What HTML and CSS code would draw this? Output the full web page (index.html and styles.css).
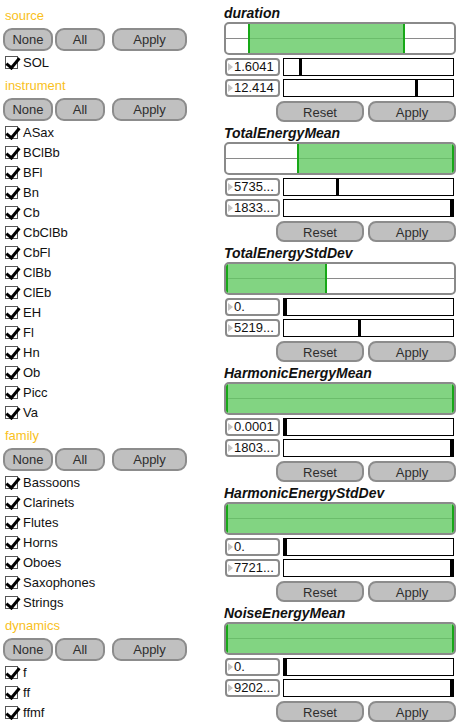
FILE: index.html
```html
<!DOCTYPE html>
<html>
<head>
<meta charset="utf-8">
<link rel="stylesheet" href="styles.css">
</head>
<body>
<div class="page">
  <div class="left">
    <section class="group">
      <div class="glabel">source</div>
      <div class="btnrow"><button class="btn w50">None</button><button class="btn w50">All</button><button class="btn w75 apply">Apply</button></div>
      <ul class="checks">
        <li><span class="cb"></span>SOL</li>
      </ul>
    </section>
    <section class="group">
      <div class="glabel">instrument</div>
      <div class="btnrow"><button class="btn w50">None</button><button class="btn w50">All</button><button class="btn w75 apply">Apply</button></div>
      <ul class="checks">
        <li><span class="cb"></span>ASax</li>
        <li><span class="cb"></span>BClBb</li>
        <li><span class="cb"></span>BFl</li>
        <li><span class="cb"></span>Bn</li>
        <li><span class="cb"></span>Cb</li>
        <li><span class="cb"></span>CbClBb</li>
        <li><span class="cb"></span>CbFl</li>
        <li><span class="cb"></span>ClBb</li>
        <li><span class="cb"></span>ClEb</li>
        <li><span class="cb"></span>EH</li>
        <li><span class="cb"></span>Fl</li>
        <li><span class="cb"></span>Hn</li>
        <li><span class="cb"></span>Ob</li>
        <li><span class="cb"></span>Picc</li>
        <li><span class="cb"></span>Va</li>
      </ul>
    </section>
    <section class="group">
      <div class="glabel">family</div>
      <div class="btnrow"><button class="btn w50">None</button><button class="btn w50">All</button><button class="btn w75 apply">Apply</button></div>
      <ul class="checks">
        <li><span class="cb"></span>Bassoons</li>
        <li><span class="cb"></span>Clarinets</li>
        <li><span class="cb"></span>Flutes</li>
        <li><span class="cb"></span>Horns</li>
        <li><span class="cb"></span>Oboes</li>
        <li><span class="cb"></span>Saxophones</li>
        <li><span class="cb"></span>Strings</li>
      </ul>
    </section>
    <section class="group">
      <div class="glabel">dynamics</div>
      <div class="btnrow"><button class="btn w50">None</button><button class="btn w50">All</button><button class="btn w75 apply">Apply</button></div>
      <ul class="checks">
        <li><span class="cb"></span>f</li>
        <li><span class="cb"></span>ff</li>
        <li><span class="cb"></span>ffmf</li>
      </ul>
    </section>
  </div>

  <div class="right">
    <section class="feat">
      <div class="ftitle">duration</div>
      <div class="range"><div class="fill" style="left:9.7%;width:68.7%"></div></div>
      <div class="numrow"><div class="num">1.6041</div><div class="bar"><i style="left:9%"></i></div></div>
      <div class="numrow"><div class="num">12.414</div><div class="bar"><i style="left:77.5%"></i></div></div>
      <div class="frow"><button class="btn fb">Reset</button><button class="btn fb">Apply</button></div>
    </section>
    <section class="feat">
      <div class="ftitle">TotalEnergyMean</div>
      <div class="range"><div class="fill" style="left:31%;width:69%"></div></div>
      <div class="numrow"><div class="num">5735...</div><div class="bar"><i style="left:31%"></i></div></div>
      <div class="numrow"><div class="num">1833...</div><div class="bar"><i class="end"></i></div></div>
      <div class="frow"><button class="btn fb">Reset</button><button class="btn fb">Apply</button></div>
    </section>
    <section class="feat">
      <div class="ftitle">TotalEnergyStdDev</div>
      <div class="range"><div class="fill" style="left:0;width:44.5%"></div></div>
      <div class="numrow"><div class="num">0.</div><div class="bar"><i style="left:0"></i></div></div>
      <div class="numrow"><div class="num">5219...</div><div class="bar"><i style="left:44%"></i></div></div>
      <div class="frow"><button class="btn fb">Reset</button><button class="btn fb">Apply</button></div>
    </section>
    <section class="feat">
      <div class="ftitle">HarmonicEnergyMean</div>
      <div class="range"><div class="fill" style="left:0;width:100%"></div></div>
      <div class="numrow"><div class="num">0.0001</div><div class="bar"><i style="left:0"></i></div></div>
      <div class="numrow"><div class="num">1803...</div><div class="bar"><i class="end"></i></div></div>
      <div class="frow"><button class="btn fb">Reset</button><button class="btn fb">Apply</button></div>
    </section>
    <section class="feat">
      <div class="ftitle">HarmonicEnergyStdDev</div>
      <div class="range"><div class="fill" style="left:0;width:100%"></div></div>
      <div class="numrow"><div class="num">0.</div><div class="bar"><i style="left:0"></i></div></div>
      <div class="numrow"><div class="num">7721...</div><div class="bar"><i class="end"></i></div></div>
      <div class="frow"><button class="btn fb">Reset</button><button class="btn fb">Apply</button></div>
    </section>
    <section class="feat">
      <div class="ftitle">NoiseEnergyMean</div>
      <div class="range"><div class="fill" style="left:0;width:100%"></div></div>
      <div class="numrow"><div class="num">0.</div><div class="bar"><i style="left:0"></i></div></div>
      <div class="numrow"><div class="num">9202...</div><div class="bar"><i class="end"></i></div></div>
      <div class="frow"><button class="btn fb">Reset</button><button class="btn fb">Apply</button></div>
    </section>
  </div>
</div>
</body>
</html>
```

FILE: styles.css
```css
* { box-sizing: border-box; }
html, body { margin: 0; padding: 0; background: #fff; }
body {
  font-family: "Liberation Sans", Arial, sans-serif;
  font-size: 13px;
  color: #111;
  width: 460px;
  height: 724px;
  overflow: hidden;
}
.page {
  display: flex;
  padding-left: 3px;
  padding-top: 2px;
}
.left {
  width: 185px;
  flex: none;
}
.right {
  width: 232px;
  margin-left: 36px;
  flex: none;
}

/* left groups */
.group { margin-top: 2px; }
.glabel {
  height: 22px;
  line-height: 23px;
  color: #f9c11c;
  font-size: 13px;
  padding-left: 2px;
}
.btnrow {
  display: flex;
  margin-top: 2px;
  height: 23px;
}
.btn {
  font-family: "Liberation Sans", Arial, sans-serif;
  font-size: 13px;
  color: #2e2e2e;
  background: #c0c0c0;
  border: 2px solid #8c8c8c;
  border-radius: 9px;
  padding: 0;
  margin: 0;
  height: 100%;
  line-height: 19px;
}
.w50 { width: 50px; margin-right: 2px; }
.w75 { width: 75px; }
.btnrow .apply { margin-left: 5px; }
.checks {
  list-style: none;
  margin: 1px 0 0 0;
  padding: 0;
}
.checks li {
  height: 20px;
  display: flex;
  align-items: center;
  padding-left: 2px;
  font-size: 13px;
  color: #111;
}
.cb {
  width: 13px;
  height: 13px;
  border: 1px solid #555;
  background: #fff;
  margin-right: 5px;
  position: relative;
  flex: none;
}
.cb::after {
  content: "";
  position: absolute;
  left: 3px;
  top: -2px;
  width: 5px;
  height: 11px;
  border-right: 3px solid #000;
  border-bottom: 3px solid #000;
  transform: rotate(40deg);
  transform-origin: center;
}

/* right features */
.feat {
  height: 120px;
  display: flex;
  flex-direction: column;
}
.ftitle {
  height: 20px;
  line-height: 22px;
  font-weight: bold;
  font-style: italic;
  font-size: 14px;
  color: #111;
}
.range {
  height: 33px;
  border: 2px solid #8a8a8a;
  border-radius: 5px;
  background: #fff;
  position: relative;
  width: 232px;
  overflow: hidden;
}
.range::before {
  content: "";
  position: absolute;
  left: 0; right: 0;
  top: 14px;
  height: 1px;
  background: #8a8a8a;
}
.fill {
  position: absolute;
  top: 0; bottom: 0;
  background: linear-gradient(#82d482 0, #82d482 14px, #6bbd6b 14px, #6bbd6b 15px, #82d482 15px);
  border-left: 2px solid #17a817;
  border-right: 2px solid #17a817;
}
.numrow {
  display: flex;
  margin-top: 3px;
  height: 18px;
  padding-left: 1px;
}
.num {
  width: 55px;
  height: 18px;
  border: 2px solid #8a8a8a;
  border-radius: 4px;
  font-size: 13px;
  line-height: 14px;
  padding-left: 7px;
  position: relative;
  color: #111;
  white-space: nowrap;
  overflow: hidden;
}
.num::before {
  content: "";
  position: absolute;
  left: 1px;
  top: 3px;
  border-left: 5px solid #c4c4c4;
  border-top: 4px solid transparent;
  border-bottom: 4px solid transparent;
}
.bar {
  margin-left: 3px;
  width: 171px;
  height: 18px;
  border: 1px solid #000;
  position: relative;
}
.bar i {
  position: absolute;
  top: 0; bottom: 0;
  width: 3px;
  background: #000;
}
.bar i.end { right: 0; }
.frow {
  display: flex;
  margin-top: 4px;
  height: 21px;
  padding-left: 52px;
  gap: 4px;
}
.fb {
  width: 88px;
  border-radius: 8px;
}
```
